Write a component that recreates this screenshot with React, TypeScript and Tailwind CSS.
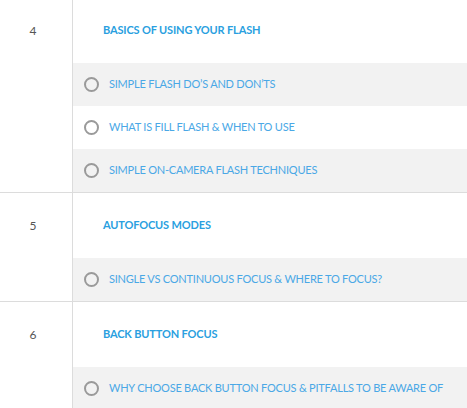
import React from "react";

type Section = { num: number; title: string; items: string[] };

const sections: Section[] = [
  {
    num: 4,
    title: "BASICS OF USING YOUR FLASH",
    items: [
      "SIMPLE FLASH DO’S AND DON’TS",
      "WHAT IS FILL FLASH & WHEN TO USE",
      "SIMPLE ON-CAMERA FLASH TECHNIQUES",
    ],
  },
  {
    num: 5,
    title: "AUTOFOCUS MODES",
    items: ["SINGLE VS CONTINUOUS FOCUS & WHERE TO FOCUS?"],
  },
  {
    num: 6,
    title: "BACK BUTTON FOCUS",
    items: ["WHY CHOOSE BACK BUTTON FOCUS & PITFALLS TO BE AWARE OF"],
  },
];

export default function App() {
  return (
    <div className="w-[467px] h-[408px] overflow-hidden bg-white">
      <div className="-mt-[2px]" style={{ fontFamily: "Lato, 'Open Sans', sans-serif" }}>
        {sections.map((s) => (
          <div key={s.num} className="flex border-b border-[#dcdcdc]">
            <div className="w-[73px] shrink-0 border-r border-[#dcdcdc]">
              <div className="h-[65px] flex items-center justify-center pr-[6px] text-[12px] text-[#555]">
                {s.num}
              </div>
            </div>
            <div className="flex-1 flex flex-col">
              <div className="h-[65px] flex items-center pl-[30px] text-[11px] tracking-[-0.15px] font-bold text-[#2a9fe0]">
                {s.title}
              </div>
              {s.items.map((it, i) => (
                <div
                  key={it}
                  className={
                    "h-[43px] flex items-center pl-[11px] text-[11px] tracking-[-0.22px] text-[#4aa8e6] " +
                    (i % 2 === 0 ? "bg-[#f2f2f2]" : "bg-white")
                  }
                >
                  <span className="w-[15px] h-[15px] rounded-full border-[2.5px] border-[#9a9a9a] mr-[10px] shrink-0" />
                  <span>{it}</span>
                </div>
              ))}
            </div>
          </div>
        ))}
      </div>
    </div>
  );
}
